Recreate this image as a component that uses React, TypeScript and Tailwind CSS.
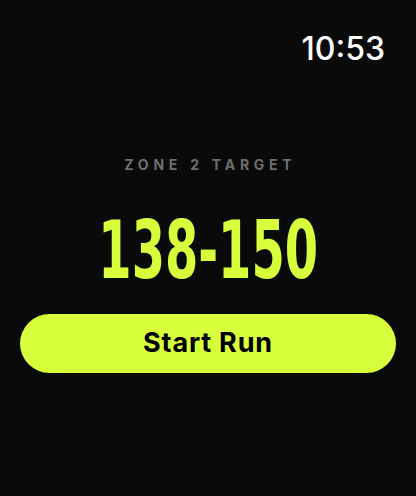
export default function App() {
  return (
    <div className="w-[416px] h-[496px] bg-[#0a0a0a] flex flex-col overflow-hidden" style={{ fontFamily: "Inter, 'Liberation Sans', sans-serif" }}>
      <div className="flex justify-end pr-[31px] pt-[31px]">
        <span className="text-[32px] leading-[36px] text-white font-medium">10:53</span>
      </div>
      <div className="flex flex-col items-center mt-[89px]">
        <span className="text-[14px] leading-[18px] font-bold tracking-[0.34em] text-[#6e6e6e] pl-[0.34em]">ZONE 2 TARGET</span>
        <span
          className="mt-[37px] text-[80px] leading-[80px] font-bold text-[#d7ff3c] scale-x-[0.665]"
          style={{ fontFamily: "'DejaVu Sans Condensed', 'DejaVu Sans', sans-serif" }}
        >
          138-150
        </span>
      </div>
      <div className="px-[20px] mt-[23px]">
        <button className="w-full h-[59px] rounded-[30px] bg-[#d7ff3c] text-black text-[27px] font-bold tracking-[0.03em]">Start Run</button>
      </div>
    </div>
  );
}
